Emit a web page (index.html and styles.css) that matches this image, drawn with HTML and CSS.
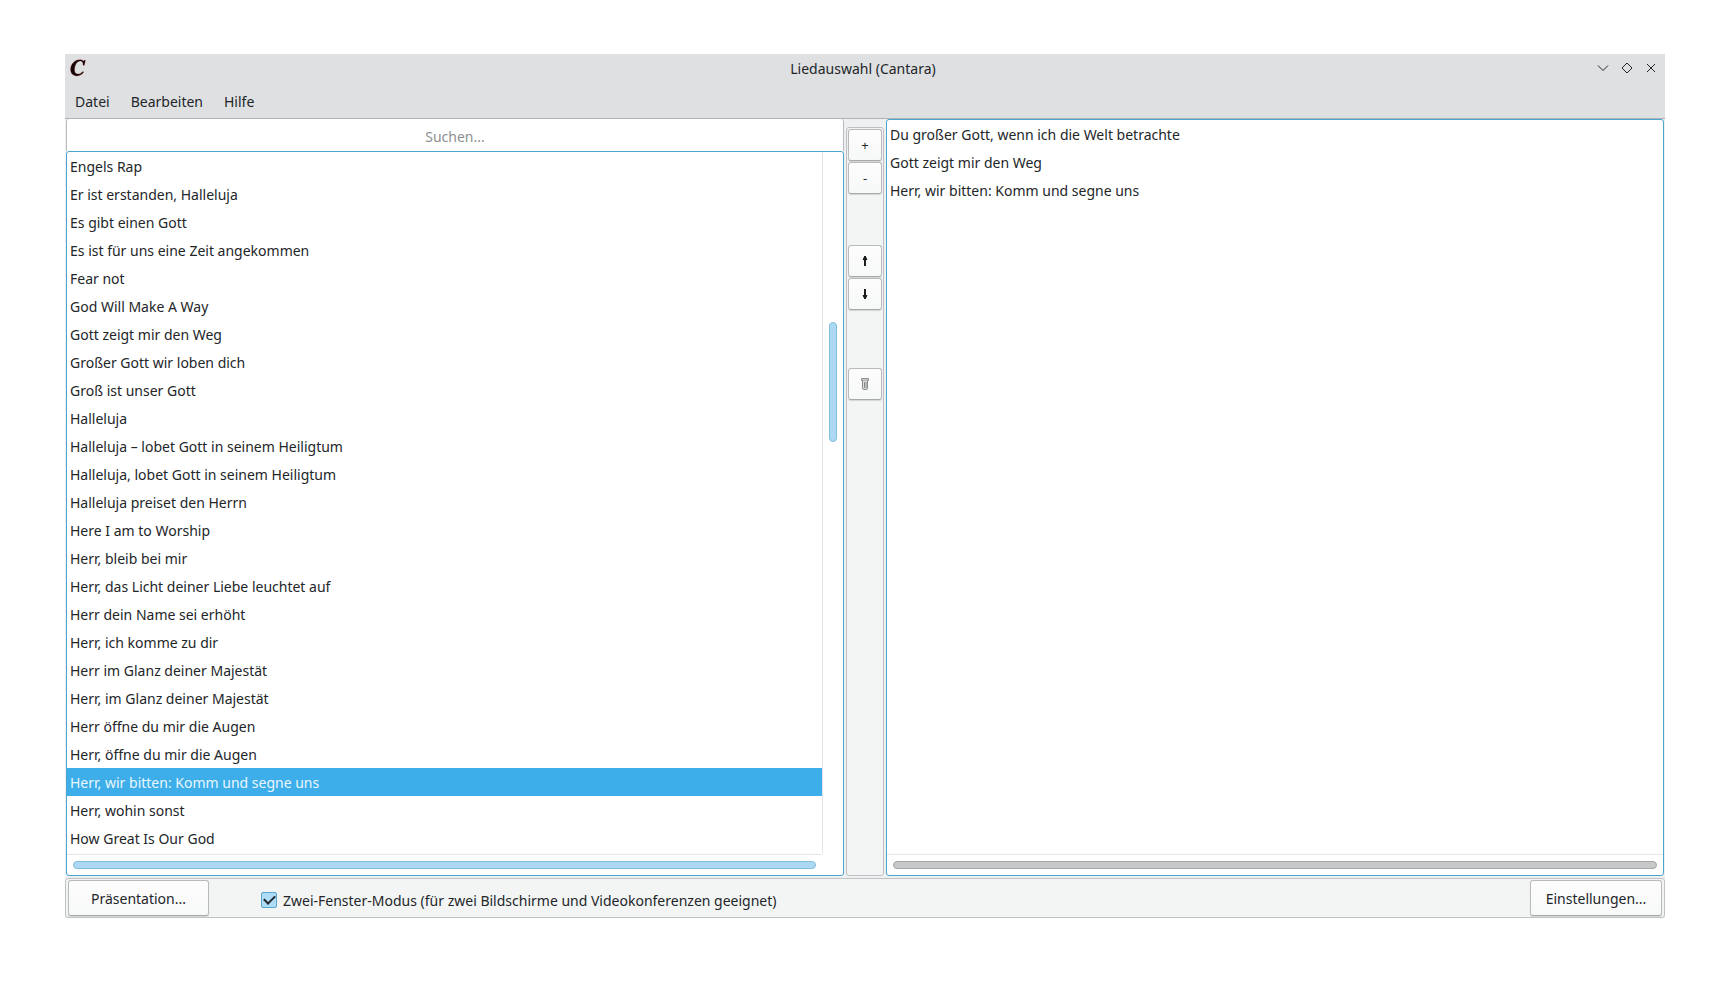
FILE: index.html
```html
<!DOCTYPE html>
<html lang="de">
<head>
<meta charset="utf-8">
<title>Liedauswahl (Cantara)</title>
<link rel="stylesheet" href="styles.css">
</head>
<body>
<div class="window">
  <header class="header">
    <div class="titlebar">
      <svg class="logo" viewBox="0 0 18 18" aria-hidden="true">
        <path d="M16.400 1.200L15.300 6.200H14.100C14.200 3.300 13.200 1.900 11.400 1.900C7.900 1.900 5.500 6.300 5.500 10.700C5.500 13.700 6.700 15 9 15C10.900 15 12.400 14.100 13.900 12.400L14.700 13.100C13 15.600 10.800 16.900 7.900 16.900C4 16.900 1.600 14.400 1.600 10.600C1.600 5.200 5.700 .8 10.600 .8C12.300 .8 13.500 1.200 14.700 2L15.500 1.200Z" fill="#160506" stroke="#d49a9a" stroke-width="1" paint-order="stroke"/>
      </svg>
      <h1 class="title">Liedauswahl (Cantara)</h1>
      <div class="controls">
        <button class="control" aria-label="Minimieren"><svg viewBox="0 0 12 12"><path d="M1 3.500L6 8.500L11 3.500"/></svg></button>
        <button class="control" aria-label="Maximieren"><svg viewBox="0 0 12 12"><path d="M6 1L11 6L6 11L1 6Z"/></svg></button>
        <button class="control" aria-label="Schließen"><svg viewBox="0 0 12 12"><path d="M2 2L10 10M10 2L2 10"/></svg></button>
      </div>
    </div>
    <nav class="menu">
      <button class="menu-item">Datei</button>
      <button class="menu-item">Bearbeiten</button>
      <button class="menu-item">Hilfe</button>
    </nav>
  </header>

  <main class="main">
    <section class="library">
      <input class="search" type="text" placeholder="Suchen..." aria-label="Suchen">
      <div class="list">
        <div class="list-view">
          <ul class="songs">
            <li>Engels Rap</li>
            <li>Er ist erstanden, Halleluja</li>
            <li>Es gibt einen Gott</li>
            <li>Es ist für uns eine Zeit angekommen</li>
            <li>Fear not</li>
            <li>God Will Make A Way</li>
            <li>Gott zeigt mir den Weg</li>
            <li>Großer Gott wir loben dich</li>
            <li>Groß ist unser Gott</li>
            <li>Halleluja</li>
            <li>Halleluja – lobet Gott in seinem Heiligtum</li>
            <li>Halleluja, lobet Gott in seinem Heiligtum</li>
            <li>Halleluja preiset den Herrn</li>
            <li>Here I am to Worship</li>
            <li>Herr, bleib bei mir</li>
            <li>Herr, das Licht deiner Liebe leuchtet auf</li>
            <li>Herr dein Name sei erhöht</li>
            <li>Herr, ich komme zu dir</li>
            <li>Herr im Glanz deiner Majestät</li>
            <li>Herr, im Glanz deiner Majestät</li>
            <li>Herr öffne du mir die Augen</li>
            <li>Herr, öffne du mir die Augen</li>
            <li class="selected">Herr, wir bitten: Komm und segne uns</li>
            <li>Herr, wohin sonst</li>
            <li>How Great Is Our God</li>
          </ul>
          <div class="track-y"><div class="thumb-y"></div></div>
        </div>
        <div class="track-x track-x-library"><div class="thumb-x"></div></div>
      </div>
    </section>

    <div class="tools">
      <div class="tool-group">
        <button class="button tool">+</button>
        <button class="button tool">-</button>
      </div>
      <div class="tool-group">
        <button class="button tool" aria-label="Nach oben"><svg viewBox="0 0 10 12"><path d="M5 1V11" stroke-width="2"/><path d="M5 1L7 4.500H3Z"/></svg></button>
        <button class="button tool" aria-label="Nach unten"><svg viewBox="0 0 10 12"><path d="M5 1V11" stroke-width="2"/><path d="M5 11L7 7.500H3Z"/></svg></button>
      </div>
      <div class="tool-group tool-group-last">
        <button class="button tool trash" aria-label="Liste leeren"><svg viewBox="0 0 10 12"><path d="M1.500 .5H8.500V2.500H1.500Z" fill="#ccc"/><path d="M2.500 2.500V10Q2.500 11.500 4 11.500H6Q7.500 11.500 7.500 10V2.500" fill="#ddd"/><path d="M4.500 4V10M6 4V10"/></svg></button>
      </div>
    </div>

    <section class="list selection">
      <div class="list-view">
        <ul class="songs">
          <li>Du großer Gott, wenn ich die Welt betrachte</li>
          <li>Gott zeigt mir den Weg</li>
          <li>Herr, wir bitten: Komm und segne uns</li>
        </ul>
      </div>
      <div class="track-x"><div class="thumb-x thumb-idle"></div></div>
    </section>
  </main>

  <footer class="footer">
    <button class="button present">Präsentation...</button>
    <label class="mode"><input class="check" type="checkbox" checked><span>Zwei-Fenster-Modus (für zwei Bildschirme und Videokonferenzen geeignet)</span></label>
    <button class="button settings">Einstellungen...</button>
  </footer>
</div>
</body>
</html>
```

FILE: styles.css
```css
* { box-sizing: border-box; }

body {
  margin: 0;
  padding: 54px 65px;
  background: #fff;
  color: #232629;
  font-family: "Noto Sans", sans-serif;
  font-size: 14px;
  line-height: 20px;
}

button, input { font: inherit; color: inherit; }

.window {
  display: flex;
  flex-direction: column;
  background: #eff0f1;
}

.header {
  background: #dee0e2;
  border-bottom: 1px solid #b0b2b4;
}

.titlebar {
  display: grid;
  grid-template-columns: 1fr auto 1fr;
  align-items: center;
  height: 28px;
  padding: 0 8px 0 4px;
}

.logo { width: 18px; height: 18px; }

.title { margin: 0; padding-top: 2px; font-size: 14px; font-weight: 400; }

.controls { display: flex; gap: 12px; justify-content: flex-end; }

.control {
  display: flex;
  padding: 0;
  border: 0;
  background: none;
}

.control svg { width: 12px; height: 12px; fill: none; stroke: #232629; stroke-width: 1; }

.menu { display: flex; height: 36px; }

.menu-item {
  padding: 3px 11px 0 10px;
  border: 0;
  background: none;
}

.main {
  display: grid;
  grid-template-columns: 1fr 38px 1fr;
  gap: 2px;
  padding: 0 1px 2px;
}

.library { display: flex; flex-direction: column; }

.search {
  width: 100%;
  height: 32px;
  padding: 2px 4px 0;
  border: 1px solid #b8babc;
  border-width: 0 1px;
  border-radius: 3px 3px 0 0;
  background: #fff;
  text-align: center;
}

.search::placeholder { color: #8e9092; opacity: 1; }

.list {
  display: flex;
  flex-direction: column;
  border: 1px solid #4aa5cf;
  border-radius: 3px;
  background: #fff;
}

.list-view { display: flex; flex: 1; }

.songs {
  flex: 1;
  margin: 0;
  padding: 0 0 2px;
  list-style: none;
}

.songs li { padding: 5px 3px 3px; }

.songs .selected { background: #3daee9; color: #eaf7fe; }

.track-y {
  width: 21px;
  padding: 170px 6px 0;
  border-left: 1px solid #e4e6e7;
}

.thumb-y {
  height: 120px;
  border: 1px solid #7fbfe0;
  border-radius: 4px;
  background: #add8f1;
}

.track-x {
  height: 21px;
  padding: 6px 6px 0;
  border-top: 1px solid #e4e6e7;
}

.track-x-library { margin-right: 21px; }

.thumb-x {
  height: 8px;
  border: 1px solid #7fbfe0;
  border-radius: 4px;
  background: #add8f1;
}

.thumb-idle { border-color: #a5a7a8; background: #c6c8c9; }

.tools {
  display: flex;
  flex-direction: column;
  gap: 51px;
  margin-top: 8px;
  padding: 1px;
  border: 1px solid #bfc0c3;
  border-radius: 3px;
  background: #f3f5f5;
}

.tool-group { display: flex; flex-direction: column; gap: 1px; }

.tool-group-last { padding-top: 7px; }

.button {
  padding: 2px 0 0;
  border: 1px solid #b8babc;
  border-bottom-color: #a6a8aa;
  border-radius: 3px;
  background: linear-gradient(#fdfdfd, #f7f8f8);
  box-shadow: 0 1px 1px #d2d4d5;
}

.tool {
  display: flex;
  align-items: center;
  justify-content: center;
  height: 32px;
  padding: 0;
  font-size: 13px;
}

.tool svg { width: 10px; height: 12px; fill: #1b1d1f; stroke: #1b1d1f; stroke-width: 1; }

.tool.trash svg { stroke: #8a8c8e; }

.footer {
  display: flex;
  align-items: center;
  height: 40px;
  padding: 0 2px;
  border: 1px solid #bfc1c2;
  border-radius: 3px;
  background: #f3f5f5;
}

.present, .settings { height: 36px; }

.present { width: 141px; }

.settings { width: 132px; margin-left: auto; }

.mode {
  display: flex;
  align-items: center;
  gap: 6px;
  margin-left: 52px;
  padding-top: 4px;
}

.mode span { padding-top: 2px; }

.check {
  appearance: none;
  width: 16px;
  height: 16px;
  margin: 0;
  border: 1px solid #5ba5cc;
  border-radius: 2px;
  background: #aedcf7;
  display: grid;
  place-items: center;
}

.check:checked::before {
  content: "";
  width: 9px;
  height: 5px;
  margin-bottom: 3px;
  border: solid #232629;
  border-width: 0 0 2px 2px;
  transform: rotate(-45deg);
}
```
